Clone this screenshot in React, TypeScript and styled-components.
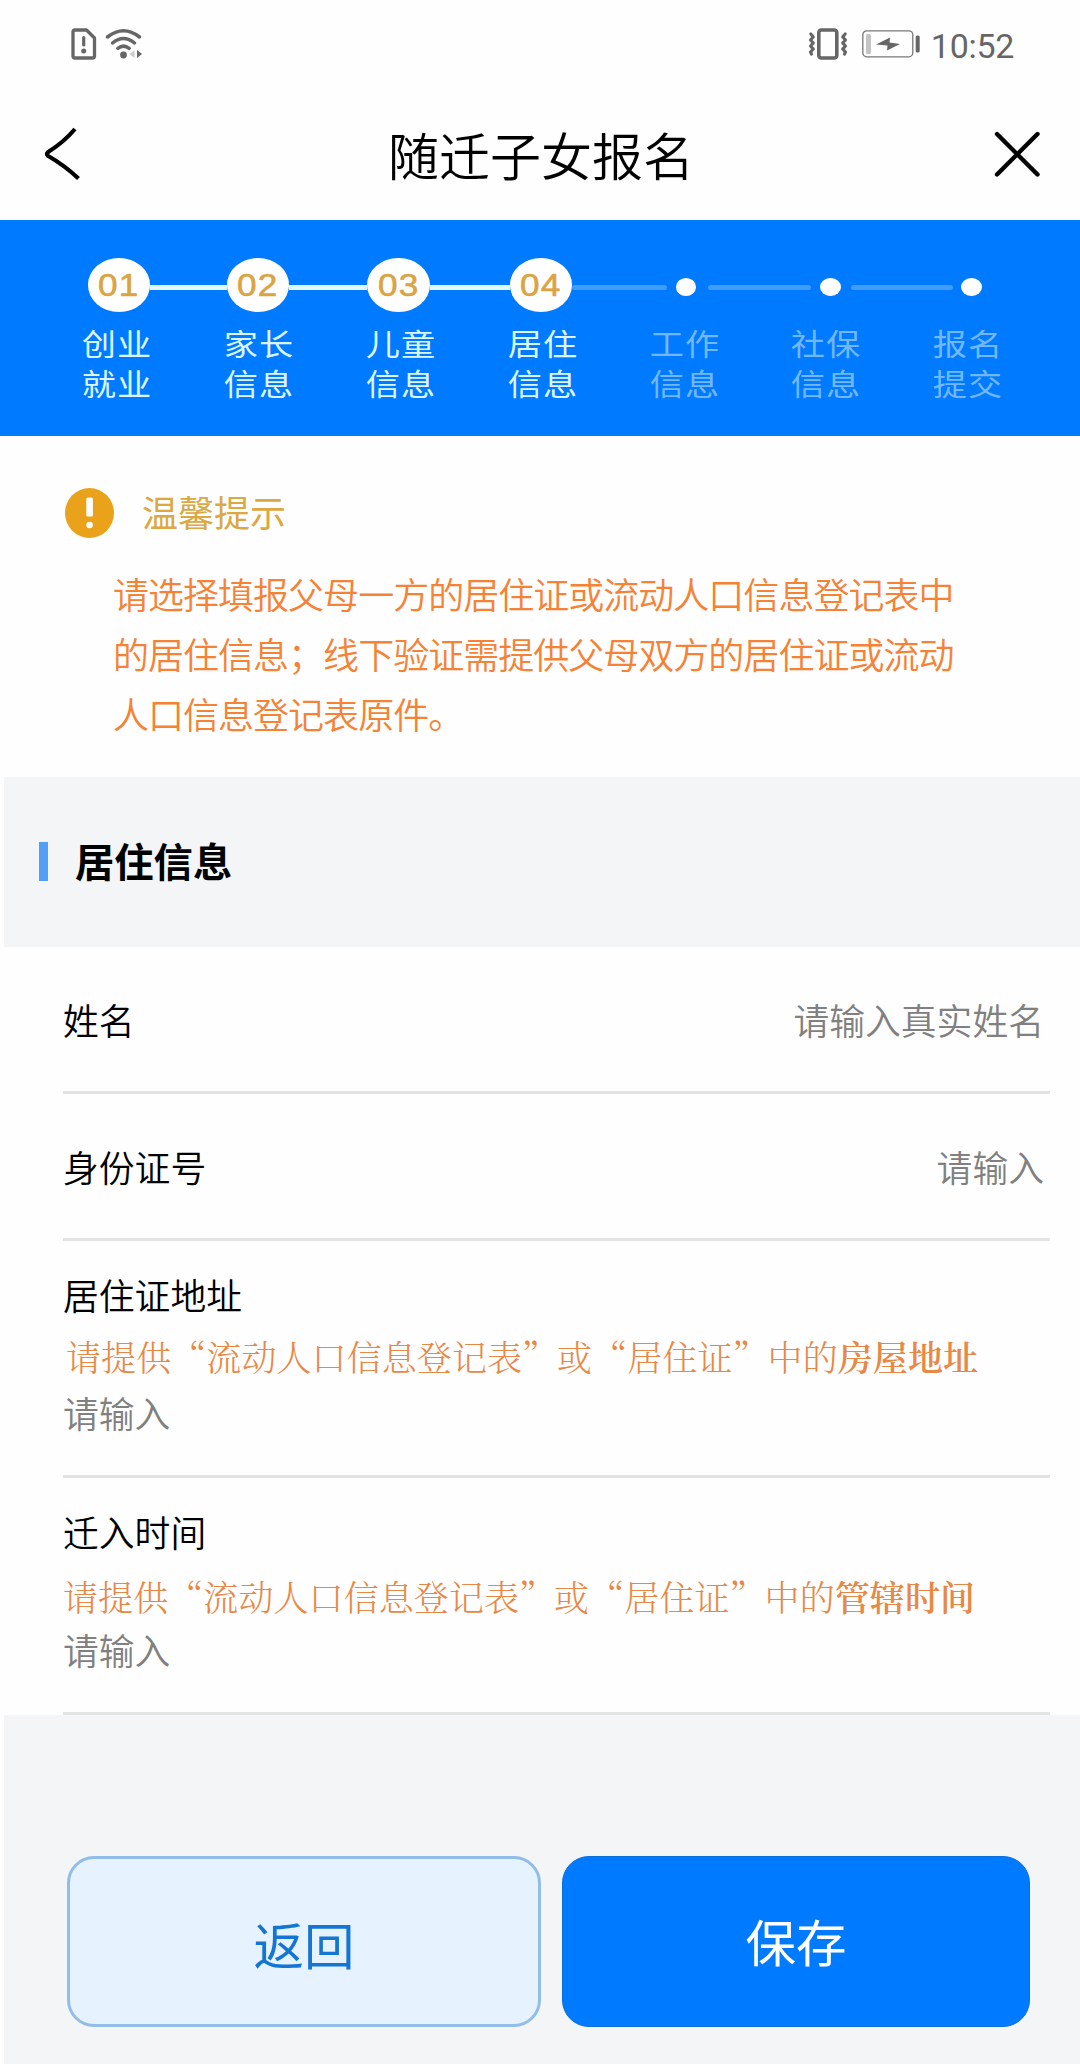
import React from "react";
import styled, { createGlobalStyle, css } from "styled-components";

const GlobalStyle = createGlobalStyle`
  * { box-sizing: border-box; }
  html, body { margin: 0; padding: 0; background: #fefefe; }
  body { font-family: "Noto Sans CJK SC", "Noto Sans", sans-serif; font-weight: 350; color: #000; }
  button { font-family: inherit; font-weight: inherit; padding: 0; border: 0; background: none; }
`;

const Page = styled.div`
  width: 1080px;
  height: 2064px;
  overflow: hidden;
  display: flex;
  flex-direction: column;
  background: #fefefe;
`;

/* ---------- Status bar ---------- */
const StatusBar = styled.header`
  height: 88px;
  padding: 0 66px 0 71px;
  display: flex;
  align-items: center;
  justify-content: space-between;
  flex: none;
`;
const StatusGroup = styled.div`
  display: flex;
  align-items: center;
`;
const StatusIcon = styled.svg<{ $ml?: number }>`
  display: block;
  flex: none;
  margin-left: ${(p) => p.$ml ?? 0}px;
`;
const Clock = styled.span`
  font: 400 34px/40px Roboto, sans-serif;
  color: #666;
  letter-spacing: -0.3px;
  margin: 3px 0 0 11px;
`;

/* ---------- Title bar ---------- */
const TitleBar = styled.nav`
  height: 132px;
  padding: 0 39px 0 44px;
  display: flex;
  justify-content: space-between;
  flex: none;
`;
const NavButton = styled.button<{ $top: number }>`
  display: flex;
  align-items: flex-start;
  padding-top: ${(p) => p.$top}px;
`;
const Title = styled.h1`
  margin: 28px 0 0 6px;
  font-size: 51px;
  line-height: 76px;
  font-weight: 350;
`;

/* ---------- Stepper ---------- */
const Stepper = styled.section`
  height: 216px;
  background: #007aff;
  padding-top: 38px;
  flex: none;
`;
const Track = styled.div`
  height: 54px;
  padding-left: 87.5px;
  display: flex;
  align-items: center;
`;
const Bubble = styled.div`
  width: 62.5px;
  height: 54px;
  border-radius: 50%;
  background: #fff;
  display: flex;
  align-items: center;
  justify-content: center;
  flex: none;
`;
const BubbleNumber = styled.span`
  font: 400 32px/36px "Liberation Sans", Arial, sans-serif;
  letter-spacing: 1px;
  color: #dba443;
  -webkit-text-stroke: 0.6px #dba443;
  transform: scaleX(1.1);
  margin-bottom: 1px;
`;
const Connector = styled.div<{ $w: number; $done?: boolean; $ml?: number; $mr?: number }>`
  width: ${(p) => p.$w}px;
  height: 5px;
  margin: 4px ${(p) => p.$mr ?? 0}px 0 ${(p) => p.$ml ?? 0}px;
  flex: none;
  ${(p) =>
    p.$done
      ? css`background: #e2f8ff;`
      : css`background: #409cff; border-radius: 3px;`}
`;
const Dot = styled.div`
  width: 20.4px;
  height: 18px;
  margin-top: 3px;
  border-radius: 50%;
  background: #fff;
  flex: none;
`;
const StepLabels = styled.div`
  display: flex;
  padding: 10px 0 0 46px;
`;
const StepLabel = styled.div<{ $done?: boolean }>`
  width: 141.9px;
  text-align: center;
  font-size: 30px;
  font-weight: 400;
  line-height: 40px;
  letter-spacing: 0.8px;
  white-space: pre-line;
  color: ${(p) => (p.$done ? "#dbf6ff" : "#70b8fb")};
  transform: scaleX(1.14);
`;

/* ---------- Notice ---------- */
const Notice = styled.section`
  height: 341px;
  padding: 52px 0 0 65px;
  flex: none;
`;
const NoticeHead = styled.div`
  display: flex;
  align-items: center;
  height: 50px;
`;
const NoticeTitle = styled.h2`
  margin: 0 0 5px 27px;
  font-size: 36px;
  line-height: 50px;
  font-weight: 400;
  color: #dba842;
`;
const NoticeText = styled.p`
  margin: 25px 0 0 48px;
  width: 900px;
  font-size: 36px;
  font-weight: 350;
  line-height: 60px;
  letter-spacing: -0.98px;
  white-space: pre-line;
  color: #f58235;
`;

/* ---------- Section heading ---------- */
const SectionHead = styled.div`
  height: 170px;
  margin-left: 4px;
  padding: 0 0 1px 35px;
  background: #f3f5f7;
  display: flex;
  align-items: center;
  flex: none;
`;
const Accent = styled.div`
  width: 9px;
  height: 39px;
  background: #549ff6;
`;
const SectionTitle = styled.h2`
  margin: 0 0 4px 27px;
  font-size: 39.3px;
  line-height: 58px;
  font-weight: 700;
`;

/* ---------- Form ---------- */
const Form = styled.div`
  padding: 0 30px 0 63px;
  flex: none;
`;
const InlineField = styled.div`
  height: 147px;
  border-bottom: 3px solid #e3e3e3;
  padding: 0 6px 1px 0;
  display: flex;
  justify-content: space-between;
  align-items: center;
`;
const StackedField = styled.div`
  height: 237px;
  border-bottom: 3px solid #e3e3e3;
  padding: 26px 0 0 0;
  display: flex;
  flex-direction: column;
`;
const Label = styled.label`
  font-size: 35.8px;
  line-height: 54px;
`;
const Placeholder = styled.span`
  font-size: 35.8px;
  line-height: 54px;
  color: #808080;
`;
const Hint = styled.p<{ $top: number; $left: number }>`
  margin: ${(p) => p.$top}px 0 ${(p) => 10 - p.$top}px ${(p) => p.$left}px;
  font-family: "Noto Serif CJK SC", "Source Han Serif SC", SimSun, "Noto Sans CJK SC", serif;
  font-size: 35px;
  letter-spacing: 0.08px;
  line-height: 54px;
  white-space: nowrap;
  font-weight: 300;
  color: #e88846;
  b { font-weight: 600; }
`;

/* ---------- Footer ---------- */
const Footer = styled.footer`
  flex: 1;
  margin-left: 4px;
  padding: 141px 50px 0 63px;
  background: #f3f5f7;
  display: flex;
  gap: 21px;
  align-items: flex-start;
`;
const ActionButton = styled.button<{ $primary?: boolean }>`
  width: ${(p) => (p.$primary ? 468 : 474)}px;
  height: 171px;
  border-radius: 27px;
  font-size: 50.5px;
  font-weight: 400;
  line-height: 76px;
  flex: none;
  ${(p) =>
    p.$primary
      ? css`background: #007aff; border: 1px solid #0a70dc; color: #fff; padding-bottom: 4px;`
      : css`background: #e6f3ff; border: 3px solid #92bde9; color: #1575d2; padding-top: 2px;`}
`;

const WARN = "请选择填报父母一方的居住证或流动人口信息登记表中\n的居住信息；线下验证需提供父母双方的居住证或流动\n人口信息登记表原件。";

const STEPS = [
  { label: "创业\n就业", done: true },
  { label: "家长\n信息", done: true },
  { label: "儿童\n信息", done: true },
  { label: "居住\n信息", done: true },
  { label: "工作\n信息", done: false },
  { label: "社保\n信息", done: false },
  { label: "报名\n提交", done: false },
];

function SimAlertIcon() {
  return (
    <StatusIcon width="26" height="32" viewBox="0 0 26 32" fill="none">
      <path d="M4 2H15.5L23.5 10V28Q23.5 30 21.5 30H4Q2 30 2 28V4Q2 2 4 2Z" stroke="#666" strokeWidth="3.3" strokeLinejoin="round" />
      <path d="M12.7 9.5V17" stroke="#666" strokeWidth="3.2" strokeLinecap="round" />
      <circle cx="12.7" cy="23" r="2.5" fill="#666" />
    </StatusIcon>
  );
}

function WifiIcon() {
  return (
    <StatusIcon $ml={8} width="38" height="32" viewBox="0 0 38 32" fill="none">
      <g stroke="#666" strokeWidth="3.5" strokeLinecap="round">
        <path d="M2.5 9Q18.5-3.5 34.5 9" />
        <path d="M7.5 15Q18.5 6 29.5 15" />
        <path d="M12.8 20.3Q18.5 16 24.2 20.3" />
      </g>
      <circle cx="18.5" cy="27" r="3.4" fill="#666" />
      <path d="M29.5 22V30L24.5 26Z" fill="#ccc" />
      <path d="M32 22V30L37 26Z" fill="#666" />
    </StatusIcon>
  );
}

function VibrateIcon() {
  return (
    <StatusIcon width="40" height="32" viewBox="0 0 40 32" fill="none">
      <rect x="10.8" y="2" width="18" height="28" rx="2.5" stroke="#666" strokeWidth="3.6" />
      <g stroke="#666" strokeWidth="3.2" strokeLinejoin="round" strokeLinecap="round">
        <path d="M2.8 6L5.3 9L2.5 12L5.3 15L2.5 18L5.3 21L2.5 24L3.5 26" />
        <path d="M37.2 6L34.7 9L37.5 12L34.7 15L37.5 18L34.7 21L37.5 24L36.5 26" />
      </g>
    </StatusIcon>
  );
}

function BatteryIcon() {
  return (
    <StatusIcon $ml={14} width="58" height="28" viewBox="0 0 58 28" fill="none">
      <rect x="0.8" y="0.8" width="50" height="26" rx="4" stroke="#777" strokeWidth="1.3" />
      <rect x="4" y="4" width="5" height="20" rx="1.5" fill="#c4c4c4" />
      <path d="M28 7.5L14 14.5L25.5 15.5L25 20.5L38 14L27.5 12.5Z" fill="#666" />
      <rect x="53.7" y="5.5" width="4" height="17" rx="1.6" fill="#666" />
    </StatusIcon>
  );
}

export default function App() {
  return (
    <Page>
      <GlobalStyle />
      <StatusBar>
        <StatusGroup>
          <SimAlertIcon />
          <WifiIcon />
        </StatusGroup>
        <StatusGroup>
          <VibrateIcon />
          <BatteryIcon />
          <Clock>10:52</Clock>
        </StatusGroup>
      </StatusBar>

      <TitleBar>
        <NavButton $top={39} aria-label="back">
          <svg width="38" height="54" viewBox="0 0 38 54" fill="none">
            <path d="M31 2Q20 15 4.2 25Q1.7 27 4.2 29Q20 38 34.5 51.5" stroke="#000" strokeWidth="4.2" />
          </svg>
        </NavButton>
        <Title>随迁子女报名</Title>
        <NavButton $top={43} aria-label="close">
          <svg width="47" height="47" viewBox="0 0 47 47" fill="none">
            <path d="M3 3L43.5 43.5M43.5 3L3 43.5" stroke="#000" strokeWidth="4.4" strokeLinecap="round" />
          </svg>
        </NavButton>
      </TitleBar>

      <Stepper>
        <Track>
          <Bubble><BubbleNumber>01</BubbleNumber></Bubble>
          <Connector $done $w={76.6} />
          <Bubble><BubbleNumber>02</BubbleNumber></Bubble>
          <Connector $done $w={78.4} />
          <Bubble><BubbleNumber>03</BubbleNumber></Bubble>
          <Connector $done $w={79.6} />
          <Bubble><BubbleNumber>04</BubbleNumber></Bubble>
          <Connector $w={95} $mr={8.7} />
          <Dot />
          <Connector $w={103} $ml={12} $mr={9} />
          <Dot />
          <Connector $w={102} $ml={10.4} $mr={8.5} />
          <Dot />
        </Track>
        <StepLabels>
          {STEPS.map((s, i) => (
            <StepLabel key={i} $done={s.done}>{s.label}</StepLabel>
          ))}
        </StepLabels>
      </Stepper>

      <Notice>
        <NoticeHead>
          <svg width="50" height="50" viewBox="0 0 50 50">
            <ellipse cx="24.5" cy="25" rx="24.5" ry="25" fill="#eaa21b" />
            <rect x="21.3" y="9.5" width="6.6" height="19" rx="1.5" fill="#fff" />
            <circle cx="24.6" cy="37" r="3.3" fill="#fff" />
          </svg>
          <NoticeTitle>温馨提示</NoticeTitle>
        </NoticeHead>
        <NoticeText>{WARN}</NoticeText>
      </Notice>

      <SectionHead>
        <Accent />
        <SectionTitle>居住信息</SectionTitle>
      </SectionHead>

      <Form>
        <InlineField>
          <Label>姓名</Label>
          <Placeholder>请输入真实姓名</Placeholder>
        </InlineField>
        <InlineField>
          <Label>身份证号</Label>
          <Placeholder>请输入</Placeholder>
        </InlineField>
        <StackedField>
          <Label>居住证地址</Label>
          <Hint $top={8} $left={3}>请提供“流动人口信息登记表”或“居住证”中的<b>房屋地址</b></Hint>
          <Placeholder>请输入</Placeholder>
        </StackedField>
        <StackedField>
          <Label>迁入时间</Label>
          <Hint $top={11} $left={0}>请提供“流动人口信息登记表”或“居住证”中的<b>管辖时间</b></Hint>
          <Placeholder>请输入</Placeholder>
        </StackedField>
      </Form>

      <Footer>
        <ActionButton>返回</ActionButton>
        <ActionButton $primary>保存</ActionButton>
      </Footer>
    </Page>
  );
}
